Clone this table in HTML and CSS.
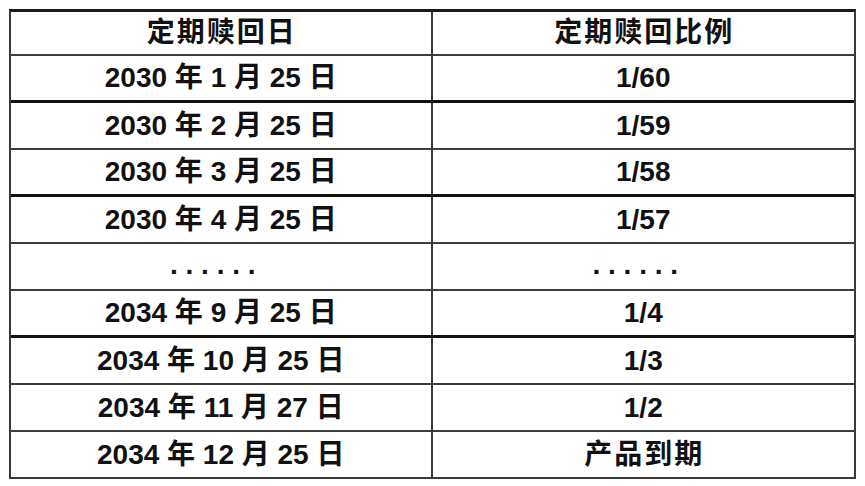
FILE: index.html
```html
<!DOCTYPE html>
<html lang="zh">
<head>
<meta charset="utf-8">
<title>定期赎回</title>
<link rel="stylesheet" href="styles.css">
</head>
<body>
<div class="table">
  <div class="row head">
    <div class="cell cjk">定期赎回日</div>
    <div class="cell cjk">定期赎回比例</div>
  </div>
  <div class="row thick">
    <div class="cell">2030 年 1 月 25 日</div>
    <div class="cell">1/60</div>
  </div>
  <div class="row">
    <div class="cell">2030 年 2 月 25 日</div>
    <div class="cell">1/59</div>
  </div>
  <div class="row thick">
    <div class="cell">2030 年 3 月 25 日</div>
    <div class="cell">1/58</div>
  </div>
  <div class="row">
    <div class="cell">2030 年 4 月 25 日</div>
    <div class="cell">1/57</div>
  </div>
  <div class="row">
    <div class="cell dots"><span class="dot-text">. . . . . .</span></div>
    <div class="cell dots"><span class="dot-text">. . . . . .</span></div>
  </div>
  <div class="row thick">
    <div class="cell">2034 年 9 月 25 日</div>
    <div class="cell">1/4</div>
  </div>
  <div class="row">
    <div class="cell">2034 年 10 月 25 日</div>
    <div class="cell">1/3</div>
  </div>
  <div class="row">
    <div class="cell">2034 年 11 月 27 日</div>
    <div class="cell">1/2</div>
  </div>
  <div class="row">
    <div class="cell">2034 年 12 月 25 日</div>
    <div class="cell cjk">产品到期</div>
  </div>
</div>
</body>
</html>
```

FILE: styles.css
```css
html, body {
  margin: 0;
  padding: 0;
  background: #ffffff;
}

body {
  font-family: "Liberation Sans", "Noto Sans CJK SC", sans-serif;
  font-weight: 700;
  font-size: 28px;
  color: #111111;
}

.table {
  margin: 9px 0 0 9px;
  width: 847px;
  border-top: 3px solid #1a1a1a;
  border-left: 2px solid #3a3a3a;
  border-right: 2px solid #3a3a3a;
  box-sizing: border-box;
  display: flex;
  flex-direction: column;
}

.row {
  display: grid;
  grid-template-columns: 1fr 1fr;
  height: 47px;
  border-bottom: 2px solid #3c3c3c;
  box-sizing: border-box;
}

.row.head {
  height: 44px;
}

.row.thick {
  border-bottom: 3px solid #111111;
}

.row:last-child {
  border-bottom: 2px solid #3a3a3a;
}

.cell {
  display: flex;
  align-items: center;
  justify-content: center;
  white-space: pre;
  line-height: 1;
}

.cell:first-child {
  border-right: 2px solid #3a3a3a;
}

.cjk {
  letter-spacing: 2px;
  padding-left: 2px;
}

.dots {
  align-items: flex-end;
  padding-bottom: 10px;
  box-sizing: border-box;
}

.dot-text {
  padding-right: 16px;
  font-size: 28px;
}
```
